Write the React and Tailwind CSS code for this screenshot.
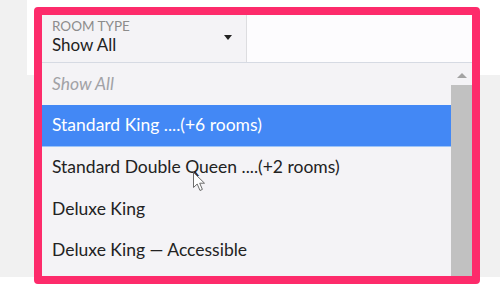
import React from 'react'

const rooms = [
  'Standard King ....(+6 rooms)',
  'Standard Double Queen ....(+2 rooms)',
  'Deluxe King',
  'Deluxe King — Accessible',
]

export default function App() {
  return (
    <div className="relative w-[500px] h-[291px] overflow-hidden bg-[#f1f1f1] font-['Lato','Noto_Sans',sans-serif]">
      {/* Page behind the popup */}
      <div className="flex h-[75px]">
        <div className="w-[27px] bg-[#f1f1f1]" />
        <div className="flex-1 bg-white" />
      </div>
      <div className="h-[202px]" />
      <div className="h-[14px] bg-white" />

      {/* Highlighted dropdown */}
      <div className="absolute left-[34px] top-[7px] w-[446px] h-[277px] border-8 border-[#fd2b6b] rounded-[4px] flex flex-col overflow-hidden bg-[#f4f3f6]">
        <div className="h-[48px] flex border-b border-[#d6dae3]">
          <div className="w-[205px] pl-[10px] pr-[14px] pt-[3px] flex justify-between border-r border-[#dddde0] bg-[#f4f3f6]">
            <div>
              <div className="text-[13.5px] leading-[16px] text-[#8c8c8c]">ROOM TYPE</div>
              <div className="text-[17px] leading-[22px] text-[#222]">Show All</div>
            </div>
            <div className="mt-[17px] w-0 h-0 border-l-[4px] border-r-[4px] border-t-[5px] border-l-transparent border-r-transparent border-t-[#222]" />
          </div>
          <div className="flex-1 bg-[#fdfcfe]" />
        </div>

        <div className="flex-1 flex min-h-0">
          <div className="flex-1 flex flex-col">
            <div className="h-[42px] shrink-0 flex items-center pl-[10px] text-[17.5px] italic text-[#a2a2a6]">Show All</div>
            {rooms.map((r, i) => (
              <div
                key={r}
                className={
                  i === 0
                    ? 'h-[41.5px] shrink-0 flex items-center pl-[10px] text-[17.5px] text-white bg-[#4388f5] border-b border-[#9cc4f8]'
                    : 'h-[41.5px] shrink-0 flex items-center pl-[10px] text-[17.5px] text-[#222]'
                }
              >
                {r}
              </div>
            ))}
          </div>
          <div className="w-[21px] flex flex-col">
            <div className="h-[22px] flex justify-center pt-[10px]">
              <div className="w-0 h-0 border-l-[5px] border-r-[5px] border-b-[5px] border-l-transparent border-r-transparent border-b-[#a3a3a3]" />
            </div>
            <div className="flex-1 bg-[#c1c1c1]" />
          </div>
        </div>
      </div>

      {/* Mouse pointer */}
      <svg className="absolute left-[193px] top-[172px]" width="14" height="20" viewBox="0 0 14 20">
        <path d="M0.5 0.5 L0.5 15.5 L4.2 12 L7 18.5 L9.4 17.4 L6.7 11.2 L11.5 11.2 Z" fill="#fff" stroke="#6b6b6b" strokeWidth="1" strokeLinejoin="round" />
      </svg>
    </div>
  )
}
